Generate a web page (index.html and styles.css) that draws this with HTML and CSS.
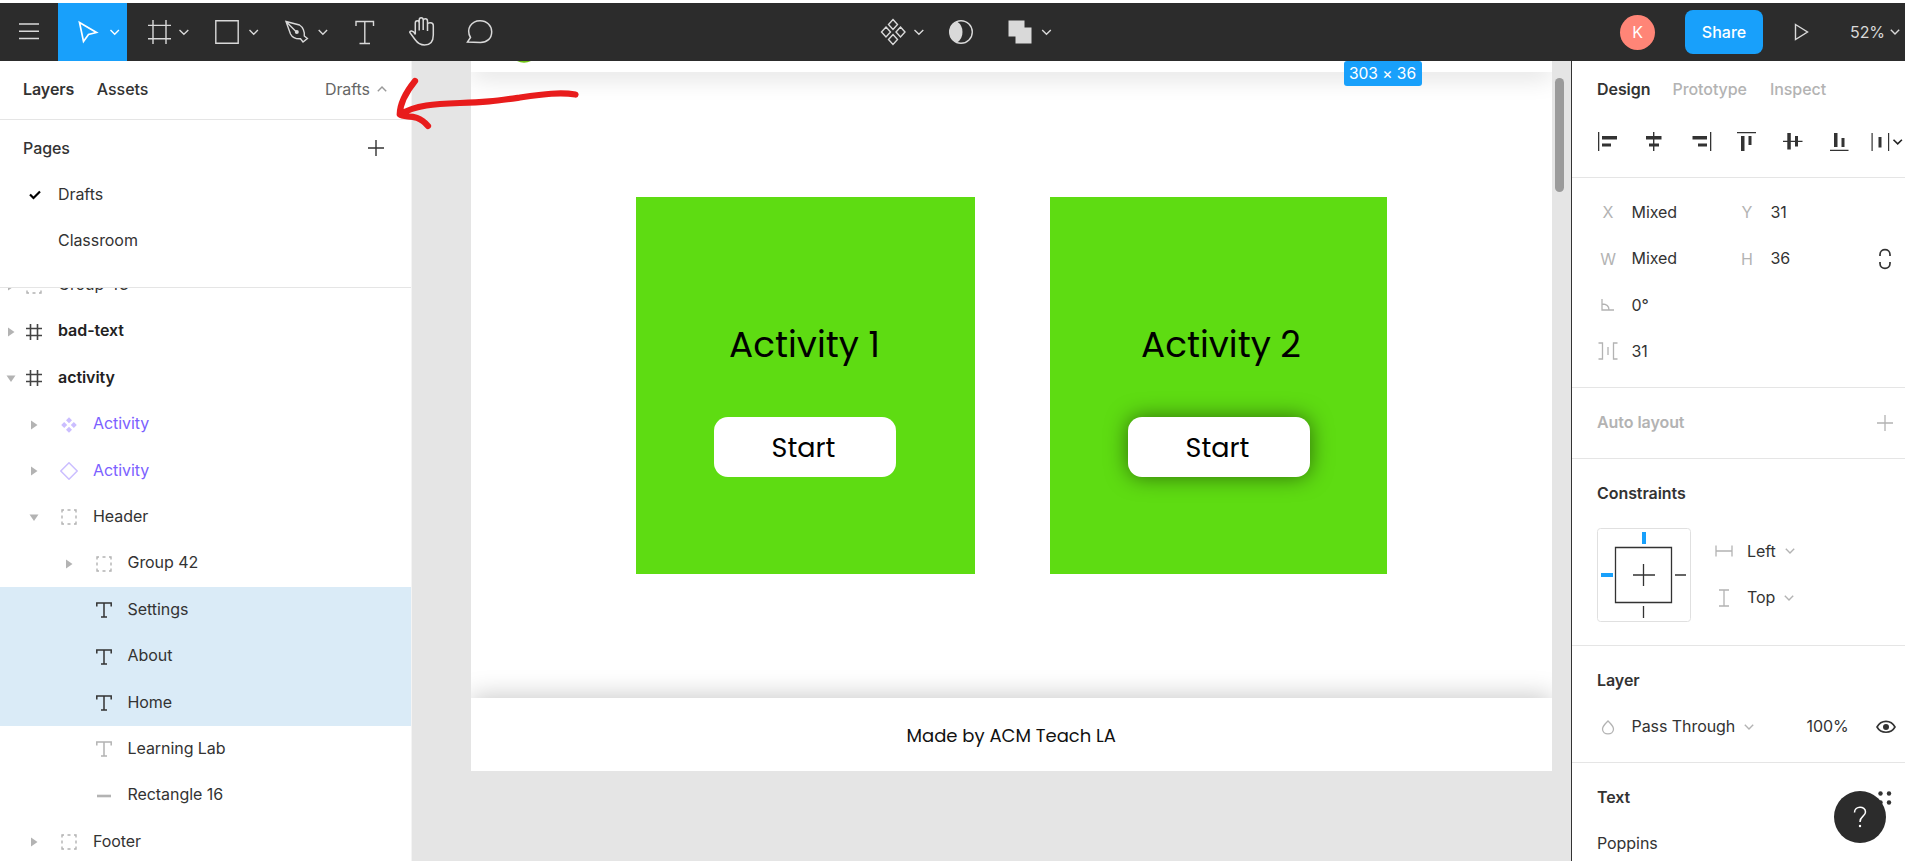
FILE: index.html
```html
<!DOCTYPE html>
<html lang="en">
<head>
<meta charset="utf-8">
<title>Design editor</title>
<link rel="stylesheet" href="styles.css">
</head>
<body>
<svg class="defs" width="0" height="0">
  <symbol id="right" viewBox="0 0 18 18"><path d="M6 4.500V13.500L12.500 9z" fill="#b3b3b3"/></symbol>
  <symbol id="down" viewBox="0 0 18 18"><path d="M4.500 6.500H13.500L9 13z" fill="#b3b3b3"/></symbol>
  <symbol id="frame" viewBox="0 0 18 18"><path d="M5.500 1V17M12.500 1V17M1 5.500H17M1 12.500H17" stroke="#444" stroke-width="1.600" fill="none"/></symbol>
  <symbol id="group" viewBox="0 0 18 18"><path d="M2 4.500V2H4M7.500 2H10.500M14 2H16V4.500M16 7.500V10.500M16 13.500V16H14M10.500 16H7.500M4 16H2V13.500M2 10.500V7.500" stroke="#b3b3b3" stroke-width="1.400" fill="none"/></symbol>
  <symbol id="text" viewBox="0 0 18 18"><path d="M1.800 5.500V2H16.200V5.500M9 2V16M6 16H12" stroke="currentColor" stroke-width="1.500" fill="none"/></symbol>
  <symbol id="chev" viewBox="0 0 10 6"><path d="M.8.800L5 5L9.200.800" stroke="currentColor" stroke-width="1.400" fill="none"/></symbol>
</svg>

<header class="toolbar">
  <div class="tools">
    <svg class="tool w58" viewBox="0 3 58 58"><path d="M19 24H39M19 31.200H39M19 38.500H39"/></svg>
    <svg class="tool w69 active" viewBox="58 3 69 58"><path d="M79.500 22.500L96.500 32.500L88.500 34.500L83.500 41.500Z" stroke-width="1.700"/><path d="M110.500 30L114.700 34.200L118.900 30"/></svg>
    <svg class="tool w70" viewBox="127 3 70 58"><path d="M153 20V44M166 20V44M148 25.400H171M148 38.800H171M179.500 30L183.900 34.200L188.300 30"/></svg>
    <svg class="tool w69" viewBox="197 3 69 58"><path d="M215.800 20.800H238.200V43.200H215.800ZM249.500 30L253.700 34.200L257.900 30"/></svg>
    <svg class="tool w70" viewBox="266 3 70 58"><path d="M286 21.500L299.500 25C303 27 304.800 32 304.300 36L307.400 38.500L303 42L300.500 38.800C296 39 292 37 290.500 34Z M286 21.500L296 31.500"/><circle cx="296.800" cy="32" r="2" fill="#d9d9d9" stroke="none"/><path d="M318.700 30L322.900 34.200L327.100 30"/></svg>
    <svg class="tool w58" viewBox="336 3 58 58"><path d="M356 26V21.500H373.500V26M364.800 21.500V43.500M359.500 43.500H370"/></svg>
    <svg class="tool w58" viewBox="394 3 58 58"><path d="M415.300 34.500V23C415.300 20 419.200 20 419.200 23V30.500M419.200 24V20C419.200 17 423.200 17 423.200 20V30M423.200 21C423.200 18 427.500 18 427.500 21.200V31M427.500 24.500C427.500 22 433.300 22 433.300 25.500V35C433.300 42 430 45 424.500 45C419.500 45 417.500 43 415 39.500L409.800 32.500C409.500 30.800 413 29.800 415.300 34.500" stroke-width="1.500"/></svg>
    <svg class="tool w58" viewBox="452 3 58 58"><path d="M467.500 42L470.500 37.500C465.500 29 471.500 20.700 480 20.700C487 20.700 491.700 25.700 491.700 31.700C491.700 38.500 487 42.500 480.500 42.500Z" stroke-width="1.500"/></svg>
  </div>
  <div class="tools center">
    <svg class="tool w70" viewBox="870 3 70 58"><path d="M893 19.500L897.500 24.500L893 29.500L888.500 24.500ZM886 27L890.500 32L886 37L881.500 32ZM900.500 27L905 32L900.500 37L896 32ZM893 34.500L897.500 39.500L893 44.500L888.500 39.500ZM914.500 30L918.900 34.200L923.300 30"/></svg>
    <svg class="tool w50" viewBox="940 3 50 58"><circle cx="961" cy="32" r="11.300"/><path d="M957 21.400A11.300 11.300 0 0 0 957 42.600Q962.500 39 962.500 32T957 21.400Z" fill="#d9d9d9" stroke="none"/></svg>
    <svg class="tool w70" viewBox="990 3 70 58"><path d="M1008.500 20.500H1024.500V27.500H1031.500V43.500H1015.500V36.500H1008.500Z" fill="#d9d9d9" stroke="none"/><path d="M1042.200 30L1046.500 34.200L1050.800 30"/></svg>
  </div>
  <div class="account">
    <span class="avatar">K</span>
    <button class="share">Share</button>
    <svg class="play" viewBox="0 0 15 18" width="15" height="18"><path d="M1.500 1.500L13.500 9L1.500 16.500Z"/></svg>
    <span class="percent">52%</span>
    <svg class="pchev" width="10" height="6"><use href="#chev"/></svg>
  </div>
</header>

<main class="editor">
  <aside class="left">
    <div class="tabs"><b>Layers</b><b class="medium">Assets</b><span class="pagepick">Drafts</span><svg class="up" width="10" height="6"><use href="#chev"/></svg></div>
    <section class="pages">
      <div class="page head"><b>Pages</b><svg width="18" height="18" viewBox="0 0 18 18"><path d="M9 1V17M1 9H17" stroke="#333" stroke-width="1.400"/></svg></div>
      <div class="page"><svg width="12" height="10" viewBox="0 0 12 10"><path d="M1 4.500L4.500 8L11 1.500" fill="none" stroke="#000" stroke-width="2.200"/></svg><span>Drafts</span></div>
      <div class="page plain"><span>Classroom</span></div>
    </section>
    <div class="layers">
      <div class="layer"><svg><use href="#right"/></svg><svg><use href="#group"/></svg><span>Group 43</span></div>
      <div class="layer strong"><svg><use href="#right"/></svg><svg><use href="#frame"/></svg><span>bad-text</span></div>
      <div class="layer strong"><svg><use href="#down"/></svg><svg><use href="#frame"/></svg><span>activity</span></div>
      <div class="layer d1 purple"><svg><use href="#right"/></svg><svg viewBox="0 0 18 18"><path d="M9 1.200L12 4.200L9 7.200L6 4.200ZM4.200 6L7.200 9L4.200 12L1.200 9ZM13.800 6L16.800 9L13.800 12L10.800 9ZM9 10.800L12 13.800L9 16.800L6 13.800Z" fill="#cbbeff"/></svg><span>Activity</span></div>
      <div class="layer d1 purple"><svg><use href="#right"/></svg><svg viewBox="0 0 18 18"><path d="M9 .800L17.200 9L9 17.200L.8 9Z" fill="none" stroke="#cbbeff" stroke-width="1.500"/></svg><span>Activity</span></div>
      <div class="layer d1"><svg><use href="#down"/></svg><svg><use href="#group"/></svg><span>Header</span></div>
      <div class="layer d2"><svg><use href="#right"/></svg><svg><use href="#group"/></svg><span>Group 42</span></div>
      <div class="layer d2 selected"><svg></svg><svg><use href="#text"/></svg><span>Settings</span></div>
      <div class="layer d2 selected"><svg></svg><svg><use href="#text"/></svg><span>About</span></div>
      <div class="layer d2 selected"><svg></svg><svg><use href="#text"/></svg><span>Home</span></div>
      <div class="layer d2"><svg></svg><svg class="faint"><use href="#text"/></svg><span>Learning Lab</span></div>
      <div class="layer d2"><svg></svg><svg viewBox="0 0 18 18"><path d="M2 9H16" stroke="#b3b3b3" stroke-width="2.600"/></svg><span>Rectangle 16</span></div>
      <div class="layer d1"><svg><use href="#right"/></svg><svg><use href="#group"/></svg><span>Footer</span></div>
    </div>
  </aside>

  <div class="canvas">
    <div class="artboard">
      <div class="site-head"><svg class="logo" width="16" height="2" viewBox="0 0 16 2"><path d="M1 0H15Q8 3.500 1 0Z" fill="#6fc414"/></svg></div>
      <div class="cards">
        <div class="card first"><h2>Activity 1</h2><div class="start">Start</div></div>
        <div class="card second"><h2>Activity 2</h2><div class="start shadow">Start</div></div>
      </div>
      <div class="site-foot"><span>Made by ACM Teach LA</span></div>
    </div>
    <span class="size">303 × 36</span>
    <i class="thumb"></i>
  </div>

  <aside class="right">
    <section class="top">
      <div class="modes"><b>Design</b><b class="off m2">Prototype</b><b class="off m3">Inspect</b></div>
      <svg class="align" viewBox="1572 119 333 45" width="333" height="45"><g fill="#333">
        <path d="M1598 132h1.300v19H1598zM1602 136h15v3.500h-15zM1602 143.500h9v3h-9z"/>
        <path d="M1653 132h1.400v19H1653zM1646 136h15.500v3.500H1646zM1649 143.500h10v3h-10z"/>
        <path d="M1710 132h1.300v19H1710zM1692.500 136h14.500v3.500h-14.500zM1698 143.500h9v3h-9z"/>
        <path d="M1737 132h19v1.300h-19zM1741 136h3.500v15H1741zM1748.500 136h3v9h-3z"/>
        <path d="M1783 140.700h19.500v1.400H1783zM1787.300 133h3.500v16.500h-3.500zM1795 136h3v10.500h-3z"/>
        <path d="M1830 149.700h18.500v1.300H1830zM1834 133h3.500v14H1834zM1841.500 138h3v9h-3z"/>
        <path d="M1871.500 133h1.200v18h-1.200zM1888 133h1.200v18H1888zM1878.500 137h3v10.500h-3z"/></g>
        <path d="M1893.500 139.700L1897.700 143.900L1901.900 139.700" fill="none" stroke="#222" stroke-width="1.600"/>
      </svg>
    </section>
    <section class="props">
      <div class="row"><i>X</i><span>Mixed</span><i>Y</i><span>31</span></div>
      <div class="row"><i>W</i><span>Mixed</span><i>H</i><span>36</span><svg width="14" height="22" viewBox="0 0 14 22"><path d="M2 8V6.500C2 0 12 0 12 6.500V8M2 14V15.500C2 22 12 22 12 15.500V14" fill="none" stroke="#333" stroke-width="1.700"/></svg></div>
      <div class="row"><i><svg width="20" height="18" viewBox="0 0 20 18"><path d="M4 3V14H16M4 8C8 8 11 10 11 14" /></svg></i><span>0°</span></div>
      <div class="row"><i><svg width="20" height="18" viewBox="0 0 20 18"><path d="M.5 1H4.500V17H.5M19.500 1H15.500V17H19.500M10 5V13"/></svg></i><span>31</span></div>
    </section>
    <section class="auto"><div class="row"><b class="grey">Auto layout</b><svg width="18" height="18" viewBox="0 0 18 18"><path d="M9 1V17M1 9H17" stroke="#b3b3b3" stroke-width="1.300"/></svg></div></section>
    <section class="constraints">
      <div class="row"><b>Constraints</b></div>
      <div class="cbody">
        <svg width="94" height="94" viewBox="0 0 94 94"><rect x=".5" y=".5" width="93" height="93" rx="3" fill="none" stroke="#e0e0e0"/><path d="M18.500 19.500H74.500V74.500H18.500ZM46.500 36V58M36 47H58M78 47H89M46.500 78V90" fill="none" stroke="#333" stroke-width="1.300"/><path d="M45 4h4v12h-4zM4 45h12v4H4z" fill="#18a0fb"/></svg>
        <div class="picks">
          <div class="pick"><svg width="18" height="18" viewBox="0 0 18 18"><path d="M1 3.500V14.500M17 3.500V14.500M1 9H17"/></svg><span>Left</span><svg class="c" width="10" height="6"><use href="#chev"/></svg></div>
          <div class="pick"><svg width="18" height="18" viewBox="0 0 18 18"><path d="M4 1H14M4 17H14M9 1V17"/></svg><span>Top</span><svg class="c" width="10" height="6"><use href="#chev"/></svg></div>
        </div>
      </div>
    </section>
    <section class="blend">
      <div class="row"><b>Layer</b></div>
      <div class="row"><i><svg width="18" height="18" viewBox="0 0 18 18"><path d="M9 3C7 5 3.500 8 3.500 11C3.500 17.500 14.500 17.500 14.500 11C14.500 8 11 5 9 3Z"/></svg></i><span class="pass">Pass Through</span><svg class="c" width="10" height="6"><use href="#chev"/></svg><span class="opacity">100%</span>
      <svg class="eye" width="20" height="14" viewBox="0 0 20 14"><path d="M1 7C5-.5 15-.5 19 7C15 14 5 14 1 7Z" fill="none" stroke="#333" stroke-width="1.600"/><circle cx="10" cy="7" r="3" fill="#333"/></svg></div>
    </section>
    <section class="type">
      <div class="row"><b>Text</b><svg width="14" height="14" viewBox="0 0 14 14" fill="#333"><circle cx="2.500" cy="2.500" r="2.200"/><circle cx="11" cy="2.500" r="2.200"/><circle cx="2.500" cy="11.500" r="2.200"/><circle cx="11" cy="11.500" r="2.200"/></svg></div>
      <div class="row"><span>Poppins</span></div>
    </section>
  </aside>
</main>
<svg class="arrow" viewBox="390 70 200 64" width="200" height="64"><path d="M575.500 94.500C560 92 545 94 520 97.500C495 101 485 102.500 460 103C435 104 415 105 400.500 114.500M415 81C406 92 400 103 399.700 114.500C405 119 416 112 428 126" fill="none" stroke="#e81c1c" stroke-width="6.200" stroke-linecap="round" stroke-linejoin="round"/></svg>
<div class="help"><svg width="14" height="22" viewBox="0 0 14 22"><path d="M1.500 6.500C1.500-.5 12.500-.5 12.500 6C12.500 10.500 7 10 7 16" fill="none" stroke="#fff" stroke-width="1.500"/><circle cx="7" cy="20" r="1.200" fill="#fff"/></svg></div>
</body>
</html>
```
FILE: styles.css
```css
* { box-sizing: border-box; }
body { margin: 0; width: 1905px; height: 861px; overflow: hidden; font: 16px/24px Inter, "Liberation Sans", sans-serif; letter-spacing: -.06px; color: #333; background: #fff; position: relative; }
svg { flex: none; display: block; }
b { font-weight: 600; }
i { font-style: normal; }
.defs { position: absolute; }

.toolbar { height: 61px; border-top: 3px solid #e4e4e4; border-image: linear-gradient(#fff 60%, #ddd 60%) 3; background: #2c2c2c; background-clip: padding-box; display: flex; }
.tools { display: flex; }
.center { margin-left: 360px; }
.tool { height: 58px; fill: none; stroke: #d9d9d9; stroke-width: 1.4; }
.w50 { width: 50px; } .w58 { width: 58px; } .w69 { width: 69px; } .w70 { width: 70px; }
.active { background: #18a0fb; stroke: #fff; }
.account { margin-left: auto; display: flex; align-items: center; color: #d9d9d9; padding-right: 5px; }
.avatar { width: 35px; height: 35px; border-radius: 50%; background: #ff8577; color: #fff; text-align: center; line-height: 34px; }
.share { width: 78px; height: 44px; margin-left: 30px; border: 0; border-radius: 8px; background: #18a0fb; color: #fff; font: 500 16px Inter, sans-serif; padding: 0 0 1px; }
.play { margin-left: 31px; fill: none; stroke: #d9d9d9; stroke-width: 1.4; }
.percent { width: 40px; margin-left: 41px; padding-bottom: 1px; }

.editor { display: grid; grid-template-columns: 412px 1159px 334px; height: 800px; }
.left { border-right: 1px solid #f4f4f4; display: flex; flex-direction: column; overflow: hidden; }
.tabs { height: 59px; flex: none; border-bottom: 1px solid #e5e5e5; display: flex; align-items: center; padding: 0 24px 2px 23px; }
.tabs .medium { margin-left: 22.500px; font-weight: 500; }
.pagepick { margin-left: auto; margin-right: 7px; color: #666; }
.up { transform: rotate(180deg); color: #999; }
.pages { height: 168px; flex: none; border-bottom: 1px solid #e5e5e5; padding-top: 5px; }
.page { height: 46.400px; display: flex; align-items: center; padding-left: 29px; }
.page span { margin-left: 17px; padding-bottom: 1px; }
.page.head { justify-content: space-between; padding: 0 26px 0 23px; }
.head b { font-weight: 500; }
.page.plain { padding-left: 41px; }
.layers { overflow: hidden; flex: 1; }
.layer { height: 46.400px; display: flex; align-items: center; }
.layer:first-child { margin-top: -25.700px; }
.layer svg { width: 18px; height: 18px; margin-left: 23px; }
.layer svg:first-child { margin-left: 2px; }
.layer svg + svg { margin-left: 5px; }
.layer span { margin-left: 15px; padding-bottom: 3px; }
.d1 svg:first-child { margin-left: 25px; }
.d2 svg:first-child { margin-left: 59.500px; }
.d1 svg + svg, .d2 svg + svg { margin-left: 17px; }
.strong span { font-weight: 600; color: #222; }
.purple span { color: #7b61ff; }
.selected { background: #daebf7; }
.faint { color: #b3b3b3; }

.canvas { position: relative; background: #e5e5e5; overflow: hidden; padding-left: 58.500px; }
.artboard { width: 1081.500px; height: 709.500px; background: #fff; display: flex; flex-direction: column; overflow: hidden; font-family: Poppins, Inter, sans-serif; letter-spacing: 0; color: #000; }
.site-head { height: 11px; flex: none; box-shadow: 0 2px 26px rgba(0,0,0,.22); padding-left: 45.500px; }
.cards { display: flex; flex: 1; padding: 124.500px 0 0 165.500px; gap: 75px; }
.card { width: 337px; height: 377px; background: #5edc12; display: flex; flex-direction: column; align-items: center; }
.first { width: 339px; padding-right: 2px; }
h2 { margin: 126px 0 0; font-size: 35.800px; line-height: 44px; font-weight: 400; }
.second h2 { padding-left: 5px; }
.start { width: 182px; height: 60px; margin-top: 50px; border-radius: 14px; background: #fff; text-align: center; font-size: 27px; line-height: 61px; padding-right: 2px; }
.shadow { box-shadow: 0 0 21px rgba(0,0,0,.5); }
.site-foot { height: 72.500px; flex: none; background: #fff; box-shadow: 0 -2px 26px rgba(0,0,0,.22); text-align: center; font-size: 18px; line-height: 76px; color: #111; }
.size { position: absolute; left: 931.500px; top: 0; width: 78px; height: 25px; border-radius: 3px; background: #18a0fb; color: #fff; text-align: center; line-height: 25px; font-size: 15.600px; }
.thumb { position: absolute; right: 7.500px; top: 17px; width: 9px; height: 114px; border-radius: 5px; background: #9b9b9b; }

.right { border-left: 1px solid #333; overflow: hidden; }
.right section { border-bottom: 1px solid #e5e5e5; padding-top: 11.600px; }
.right section.top { height: 117px; padding: 0; }
.modes { display: flex; height: 58px; align-items: center; padding: 0 0 2px 25px; }
.off { color: #b3b3b3; font-weight: 500; }
.m2 { margin-left: 22px; } .m3 { margin-left: 23px; }
.right .props { height: 210px; }
.right .auto { height: 71px; }
.right .constraints { height: 187px; }
.right .blend { height: 117px; }
.row { height: 46.400px; display: flex; align-items: center; padding: 0 13px 0 25px; }
.row b, .row span { padding-bottom: 2px; }
.row i { width: 22px; display: flex; justify-content: center; color: #b3b3b3; margin-right: 12.500px; padding-bottom: 1px; }
.props .row span { width: 104.500px; }
.row > svg:last-child { margin-left: auto; }
.row i svg, .pick svg { fill: none; stroke: #b3b3b3; stroke-width: 1.3; }
.auto .row { padding-right: 11px; }
.grey { color: #b3b3b3; }
.cbody { display: flex; padding-left: 25px; margin-top: 11px; }
.picks { margin-left: 24px; }
.pick { height: 46.400px; display: flex; align-items: center; }
.pick span { margin-left: 14px; padding-bottom: 1px; }
.pick .c, .blend .c { color: #b3b3b3; margin-left: 9px; }
.pick .c { stroke: none; }
.pass { width: 103px; white-space: nowrap; }
.opacity { margin-left: 53px; }
.blend .row { padding-right: 9px; }
.right .type { border: 0; }

.arrow { position: absolute; left: 390px; top: 70px; }
.help { position: absolute; left: 1834px; top: 791px; width: 52px; height: 52px; border-radius: 50%; background: #2c2c2c; display: flex; align-items: center; justify-content: center; }
```
